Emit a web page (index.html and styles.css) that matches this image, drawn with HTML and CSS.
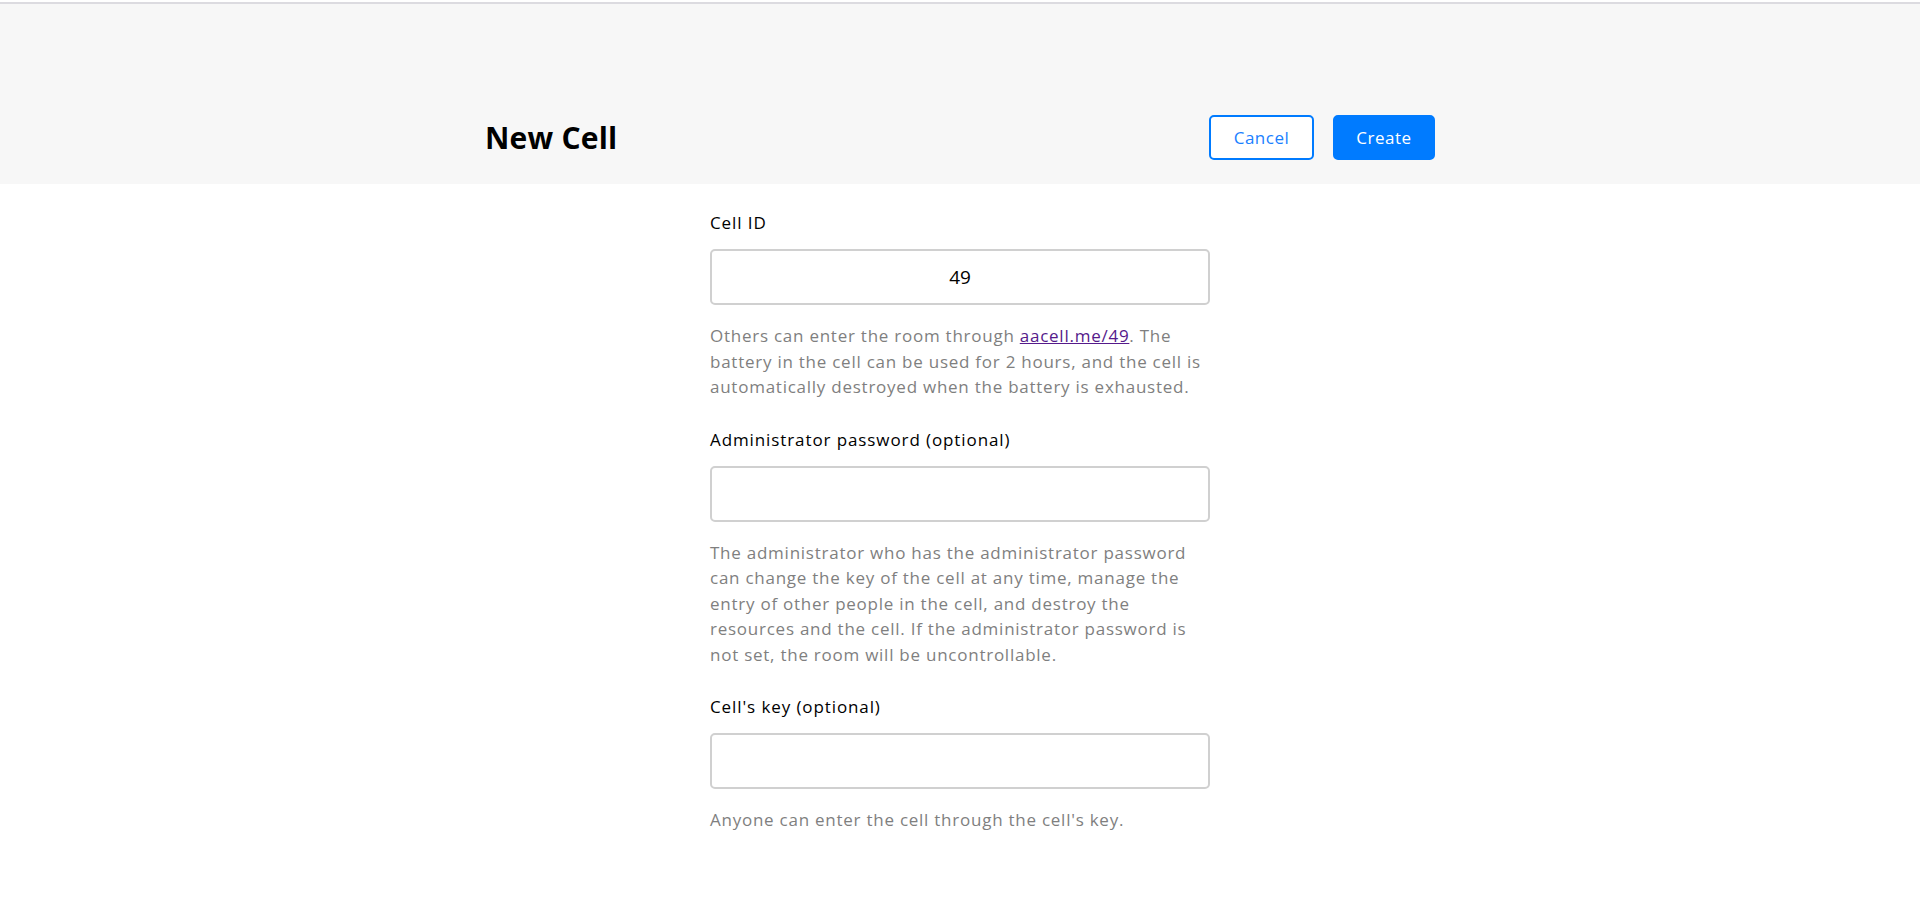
FILE: index.html
```html
<!DOCTYPE html>
<html lang="en">
<head>
<meta charset="utf-8">
<title>New Cell</title>
<link rel="stylesheet" href="styles.css">
</head>
<body>
<div class="topline"></div>
<header class="header">
  <div class="header-inner">
    <h1 class="title">New Cell</h1>
    <div class="actions">
      <button class="btn btn-outline" type="button">Cancel</button>
      <button class="btn btn-primary" type="button">Create</button>
    </div>
  </div>
</header>
<main class="form">
  <section class="field">
    <label class="label" for="cellid">Cell ID</label>
    <input class="input input-center" id="cellid" type="text" value="49">
    <p class="help">Others can enter the room through <a class="link" href="#">aacell.me/49</a>. The battery in the cell can be used for 2 hours, and the cell is automatically destroyed when the battery is exhausted.</p>
  </section>
  <section class="field">
    <label class="label" for="adminpw">Administrator password (optional)</label>
    <input class="input" id="adminpw" type="password">
    <p class="help">The administrator who has the administrator password can change the key of the cell at any time, manage the entry of other people in the cell, and destroy the resources and the cell. If the administrator password is not set, the room will be uncontrollable.</p>
  </section>
  <section class="field">
    <label class="label" for="cellkey">Cell's key (optional)</label>
    <input class="input" id="cellkey" type="text">
    <p class="help">Anyone can enter the cell through the cell's key.</p>
  </section>
</main>
</body>
</html>
```

FILE: styles.css
```css
* { box-sizing: border-box; }
html, body { margin: 0; padding: 0; background: #ffffff; }
body {
  font-family: "Open Sans", "Liberation Sans", sans-serif;
  font-size: 16px;
  color: #000;
}
.topline {
  margin-top: 2px;
  height: 2px;
  background: #dcdbe0;
}
.header {
  background: #f7f7f7;
  height: 180px;
  padding-top: 111px;
}
.header-inner {
  width: 950px;
  margin: 0 auto;
  display: flex;
  align-items: center;
  justify-content: space-between;
}
.title {
  margin: 0;
  font-size: 30px;
  font-weight: 700;
  line-height: 45px;
  color: #000;
  letter-spacing: 0.2px;
}
.actions {
  display: flex;
  gap: 19px;
}
.btn {
  height: 45px;
  border-radius: 5px;
  border: 2px solid #007bff;
  font-family: inherit;
  font-size: 17px;
  padding: 0;
  cursor: pointer;
  letter-spacing: 0.5px;
}
.btn-outline {
  width: 105px;
  background: #ffffff;
  color: #1a80ff;
}
.btn-primary {
  width: 102px;
  background: #007bff;
  color: #ffffff;
  font-weight: 500;
}
.form {
  width: 500px;
  margin: 0 auto;
  padding-top: 27px;
}
.field {
  display: flex;
  flex-direction: column;
  margin-bottom: 28px;
}
.label {
  font-size: 17px;
  line-height: 24px;
  color: #000;
  letter-spacing: 0.9px;
}
.input {
  margin-top: 14px;
  height: 56px;
  width: 100%;
  border: 2px solid #d0d0d0;
  border-radius: 5px;
  background: #fff;
  font-family: inherit;
  font-size: 19px;
  padding: 0 12px;
  color: #000;
  outline: none;
}
.input-center { text-align: center; }
.help {
  margin: 18px 0 0;
  font-size: 17px;
  line-height: 25.5px;
  color: #7f7f7f;
  letter-spacing: 0.75px;
}
.link {
  color: #551a8b;
  text-decoration: underline;
}
```
